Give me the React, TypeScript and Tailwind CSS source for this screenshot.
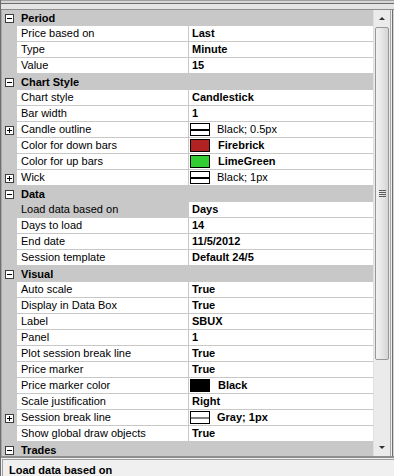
import React from 'react';

type Row =
  | { kind: 'cat'; name: string }
  | {
      kind: 'prop';
      label: string;
      value: string;
      bold?: boolean;
      expand?: boolean;
      color?: string;
      pen?: string;
      penWidth?: number;
      selected?: boolean;
    };

const rows: Row[] = [
  { kind: 'cat', name: 'Period' },
  { kind: 'prop', label: 'Price based on', value: 'Last', bold: true },
  { kind: 'prop', label: 'Type', value: 'Minute', bold: true },
  { kind: 'prop', label: 'Value', value: '15', bold: true },
  { kind: 'cat', name: 'Chart Style' },
  { kind: 'prop', label: 'Chart style', value: 'Candlestick', bold: true },
  { kind: 'prop', label: 'Bar width', value: '1', bold: true },
  { kind: 'prop', label: 'Candle outline', value: 'Black; 0.5px', expand: true, pen: '#000000', penWidth: 2 },
  { kind: 'prop', label: 'Color for down bars', value: 'Firebrick', bold: true, color: '#b22222' },
  { kind: 'prop', label: 'Color for up bars', value: 'LimeGreen', bold: true, color: '#32cd32' },
  { kind: 'prop', label: 'Wick', value: 'Black; 1px', expand: true, pen: '#000000', penWidth: 2 },
  { kind: 'cat', name: 'Data' },
  { kind: 'prop', label: 'Load data based on', value: 'Days', bold: true, selected: true },
  { kind: 'prop', label: 'Days to load', value: '14', bold: true },
  { kind: 'prop', label: 'End date', value: '11/5/2012', bold: true },
  { kind: 'prop', label: 'Session template', value: 'Default 24/5', bold: true },
  { kind: 'cat', name: 'Visual' },
  { kind: 'prop', label: 'Auto scale', value: 'True', bold: true },
  { kind: 'prop', label: 'Display in Data Box', value: 'True', bold: true },
  { kind: 'prop', label: 'Label', value: 'SBUX', bold: true },
  { kind: 'prop', label: 'Panel', value: '1', bold: true },
  { kind: 'prop', label: 'Plot session break line', value: 'True', bold: true },
  { kind: 'prop', label: 'Price marker', value: 'True', bold: true },
  { kind: 'prop', label: 'Price marker color', value: 'Black', bold: true, color: '#000000' },
  { kind: 'prop', label: 'Scale justification', value: 'Right', bold: true },
  { kind: 'prop', label: 'Session break line', value: 'Gray; 1px', bold: true, expand: true, pen: '#808080', penWidth: 2 },
  { kind: 'prop', label: 'Show global draw objects', value: 'True', bold: true },
  { kind: 'cat', name: 'Trades' },
];

function Box({ plus }: { plus?: boolean }) {
  return (
    <div className="relative w-[9px] h-[9px] border border-[#3c3c3c] bg-white">
      <div className="absolute left-[1px] top-[3px] w-[5px] h-[1px] bg-black" />
      {plus && <div className="absolute left-[3px] top-[1px] w-[1px] h-[5px] bg-black" />}
    </div>
  );
}

function CategoryRow({ name }: { name: string }) {
  return (
    <div className="flex h-[16px] shrink-0 bg-[#c8c8c8]">
      <div className="w-[15px] flex items-center justify-center">
        <Box />
      </div>
      <div className="pl-[4px] font-bold leading-[16px]">{name}</div>
    </div>
  );
}

function PropRow({ row }: { row: Extract<Row, { kind: 'prop' }> }) {
  return (
    <div className="flex h-[16px] shrink-0">
      <div className="w-[15px] bg-[#c8c8c8] flex items-center justify-center">
        {row.expand && <Box plus />}
      </div>
      <div
        className={`w-[172px] pl-[4px] leading-[15px] border-b border-r border-[#c8c8c8] whitespace-nowrap overflow-hidden ${
          row.selected ? 'bg-[#c8c8c8]' : 'bg-white'
        }`}
      >
        {row.label}
      </div>
      <div className="flex-1 flex items-start bg-white border-b border-[#c8c8c8] whitespace-nowrap overflow-hidden">
        {row.color && (
          <div className="mt-[1px] ml-[1px] mr-[8px] w-[20px] h-[13px] border border-black" style={{ background: row.color }} />
        )}
        {row.pen && (
          <div className="mt-[1px] ml-[1px] mr-[7px] w-[20px] h-[13px] border border-black bg-white flex items-center">
            <div className="w-full" style={{ background: row.pen, height: row.penWidth }} />
          </div>
        )}
        <span className={`${row.color || row.pen ? '' : 'pl-[3px]'} leading-[15px] ${row.bold ? 'font-bold' : ''}`}>
          {row.value}
        </span>
      </div>
    </div>
  );
}

function ScrollBar() {
  return (
    <div className="w-[17px] flex flex-col bg-[#ebebeb] border-l border-[#e0e0e0]">
      <div className="h-[17px] shrink-0 flex items-center justify-center">
        <div className="w-0 h-0 border-l-[3px] border-r-[3px] border-b-[3px] border-l-transparent border-r-transparent border-b-[#303030]" />
      </div>
      <div className="h-[333px] shrink-0 mx-[1px] rounded-[2px] border border-[#979797] bg-gradient-to-r from-[#f2f2f2] via-[#e6e6e6] to-[#d4d4d4] flex flex-col items-center justify-center gap-[1px]">
        <div className="w-[7px] h-[1px] bg-[#5a5a5a]" />
        <div className="w-[7px] h-[1px] bg-[#5a5a5a]" />
        <div className="w-[7px] h-[1px] bg-[#5a5a5a]" />
        <div className="w-[7px] h-[1px] bg-[#5a5a5a]" />
      </div>
      <div className="flex-1" />
      <div className="h-[17px] shrink-0 flex items-center justify-center">
        <div className="w-0 h-0 border-l-[3px] border-r-[3px] border-t-[3px] border-l-transparent border-r-transparent border-t-[#303030]" />
      </div>
    </div>
  );
}

export default function App() {
  return (
    <div className="w-[394px] h-[476px] flex flex-col overflow-hidden bg-[#f0f0f0] border-l border-[#6e6e6e] font-['Liberation_Sans',Arial,sans-serif] text-[11px] text-black">
      <div className="h-[10px] shrink-0 bg-[#d6d6d6] border-t border-[#a0a0a0] flex flex-col">
        <div className="h-[2px]" />
        <div className="h-[1px] bg-[#6e6e6e]" />
        <div className="flex-1 bg-[#e4e4e4]" />
        <div className="h-[1px] bg-[#8e8e8e]" />
      </div>
      <div className="h-[446px] shrink-0 flex border-l border-[#a8a8a8]">
        <div className="w-[371px] flex flex-col overflow-hidden bg-white">
          {rows.map((r, i) =>
            r.kind === 'cat' ? <CategoryRow key={i} name={r.name} /> : <PropRow key={i} row={r} />
          )}
        </div>
        <ScrollBar />
        <div className="flex-1 flex border-l border-[#a8a8a8]">
          <div className="w-[1px] bg-[#f0f0f0]" />
          <div className="w-[1px] bg-[#6e6e6e]" />
          <div className="flex-1 bg-[#d6d6d6]" />
        </div>
      </div>
      <div className="flex-1 border-t-2 border-[#8e8e8e] bg-[#f0f0f0] pt-[1px] pl-[1px]">
        <div className="h-full border-t border-l border-[#a0a0a0] pl-[6px] pt-[3px] font-bold leading-[14px]">
          Load data based on
        </div>
      </div>
    </div>
  );
}
